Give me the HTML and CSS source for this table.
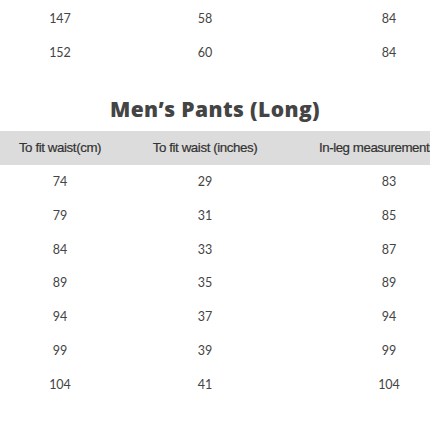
FILE: index.html
```html
<!DOCTYPE html>
<html>
<head>
<meta charset="utf-8">
<link rel="stylesheet" href="styles.css">
</head>
<body>
<div class="page">
  <div class="table-wrap">
    <table class="size-table">
      <colgroup><col class="c1"><col class="c2"><col class="c3"></colgroup>
      <tbody>
        <tr><td>147</td><td>58</td><td>84</td></tr>
        <tr><td>152</td><td>60</td><td>84</td></tr>
      </tbody>
    </table>
  </div>
  <h2 class="title">Men’s Pants (Long)</h2>
  <div class="table-wrap">
    <table class="size-table">
      <colgroup><col class="c1"><col class="c2"><col class="c3"></colgroup>
      <thead>
        <tr><th>To fit waist(cm)</th><th>To fit waist (inches)</th><th class="th-wide">In-leg measurements</th></tr>
      </thead>
      <tbody>
        <tr><td>74</td><td>29</td><td>83</td></tr>
        <tr><td>79</td><td>31</td><td>85</td></tr>
        <tr><td>84</td><td>33</td><td>87</td></tr>
        <tr><td>89</td><td>35</td><td>89</td></tr>
        <tr><td>94</td><td>37</td><td>94</td></tr>
        <tr><td>99</td><td>39</td><td>99</td></tr>
        <tr><td>104</td><td>41</td><td>104</td></tr>
      </tbody>
    </table>
  </div>
</div>
</body>
</html>
```

FILE: styles.css
```css
html, body {
  margin: 0;
  padding: 0;
  background: #ffffff;
}
.page {
  width: 430px;
  height: 430px;
  overflow: hidden;
  padding-top: 2px;
  box-sizing: border-box;
}
.table-wrap {
  width: 430px;
  overflow: hidden;
}
.size-table {
  width: 488px;
  table-layout: fixed;
  border-collapse: collapse;
}
.c1 { width: 120px; }
.c2 { width: 170px; }
.c3 { width: 198px; }
.size-table td {
  height: 33.8px;
  padding: 0;
  text-align: center;
  vertical-align: middle;
  font-family: "Lato", "Liberation Sans", sans-serif;
  font-size: 12.5px;
  color: #444444;
}
.size-table th {
  height: 34px;
  padding: 0;
  background: #dcdcdc;
  text-align: center;
  vertical-align: middle;
  font-family: "Liberation Sans", Arial, sans-serif;
  font-size: 13.3px;
  font-weight: normal;
  letter-spacing: -0.4px;
  color: #333333;
  white-space: nowrap;
  -webkit-text-stroke: 0.2px #333333;
}
.size-table th.th-wide {
  text-align: left;
  padding-left: 29px;
  letter-spacing: -0.45px;
}
.title {
  margin: 25px 0 8px;
  height: 28px;
  line-height: 28px;
  text-align: center;
  font-family: "Open Sans", "Liberation Sans", sans-serif;
  font-weight: 800;
  font-size: 21px;
  letter-spacing: 0.4px;
  color: #444444;
}
```
